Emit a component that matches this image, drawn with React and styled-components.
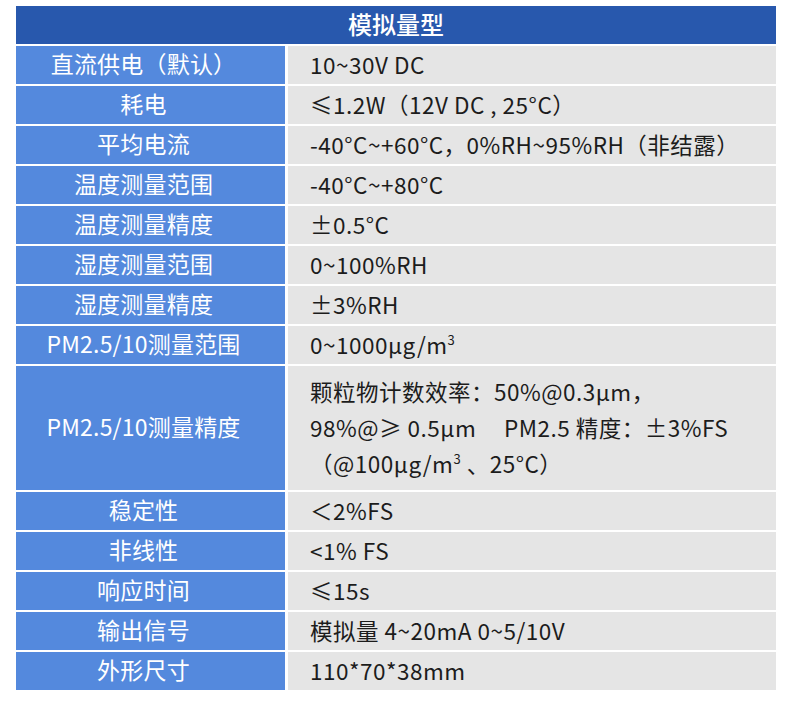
import React from 'react';
import styled, { createGlobalStyle } from 'styled-components';

const GlobalStyle = createGlobalStyle`
  html, body {
    margin: 0;
    padding: 0;
    background: #ffffff;
  }
  body {
    font-family: 'Noto Sans CJK SC', 'Noto Sans', sans-serif;
  }
`;

const Page = styled.div`
  width: 790px;
  height: 724px;
  padding: 6px 0 0 16px;
  box-sizing: border-box;
`;

const Table = styled.div`
  display: grid;
  grid-template-columns: 269px 488px;
  column-gap: 3px;
  row-gap: 2px;
  width: 760px;
`;

const Header = styled.div`
  grid-column: 1 / span 2;
  height: 38px;
  padding-bottom: 3px;
  box-sizing: border-box;
  background: #2858ad;
  color: #ffffff;
  font-size: 24px;
  font-weight: 500;
  display: flex;
  align-items: center;
  justify-content: center;
`;

const Label = styled.div`
  min-height: 38px;
  background: #5489dd;
  color: #ffffff;
  font-size: 23px;
  letter-spacing: 0.2px;
  display: flex;
  align-items: center;
  justify-content: center;
  padding: 0 14px 4px 0;
  box-sizing: border-box;
  white-space: nowrap;
`;

const Value = styled.div`
  min-height: 38px;
  background: #e5e5e5;
  color: #1c1c1c;
  font-size: 22.5px;
  letter-spacing: 0.5px;
  line-height: ${(p) => (p.multi ? '36px' : '26px')};
  padding: ${(p) => (p.multi ? '7px 0 9px 22px' : '0 0 3px 22px')};
  box-sizing: border-box;
  display: flex;
  flex-direction: column;
  justify-content: center;
  white-space: pre;
`;

const Line = styled.span`
  display: block;
`;

const Sup = styled.sup`
  font-size: 13px;
  line-height: 0;
  vertical-align: 9px;
`;

const rows = [
  ['直流供电（默认）', '10~30V DC'],
  ['耗电', '≤1.2W（12V DC , 25°C）'],
  ['平均电流', '-40°C~+60°C，0%RH~95%RH（非结露）'],
  ['温度测量范围', '-40°C~+80°C'],
  ['温度测量精度', '±0.5°C'],
  ['湿度测量范围', '0~100%RH'],
  ['湿度测量精度', '±3%RH'],
  ['PM2.5/10测量范围', <>0~1000μg/m<Sup>3</Sup></>],
  [
    'PM2.5/10测量精度',
    <>
      <Line>颗粒物计数效率：50%@0.3μm，</Line>
      <Line>98%@≥ 0.5μm     PM2.5 精度：±3%FS</Line>
      <Line>（@100μg/m<Sup>3</Sup> 、25°C）</Line>
    </>,
    true,
  ],
  ['稳定性', '＜2%FS'],
  ['非线性', '<1% FS'],
  ['响应时间', '≤15s'],
  ['输出信号', '模拟量 4~20mA 0~5/10V'],
  ['外形尺寸', '110*70*38mm'],
];

const App = () => (
  <>
    <GlobalStyle />
    <Page>
      <Table>
        <Header>模拟量型</Header>
        {rows.map(([label, value, multi], i) => (
          <React.Fragment key={i}>
            <Label>{label}</Label>
            <Value multi={multi}>{multi ? value : <Line>{value}</Line>}</Value>
          </React.Fragment>
        ))}
      </Table>
    </Page>
  </>
);

export default App;
